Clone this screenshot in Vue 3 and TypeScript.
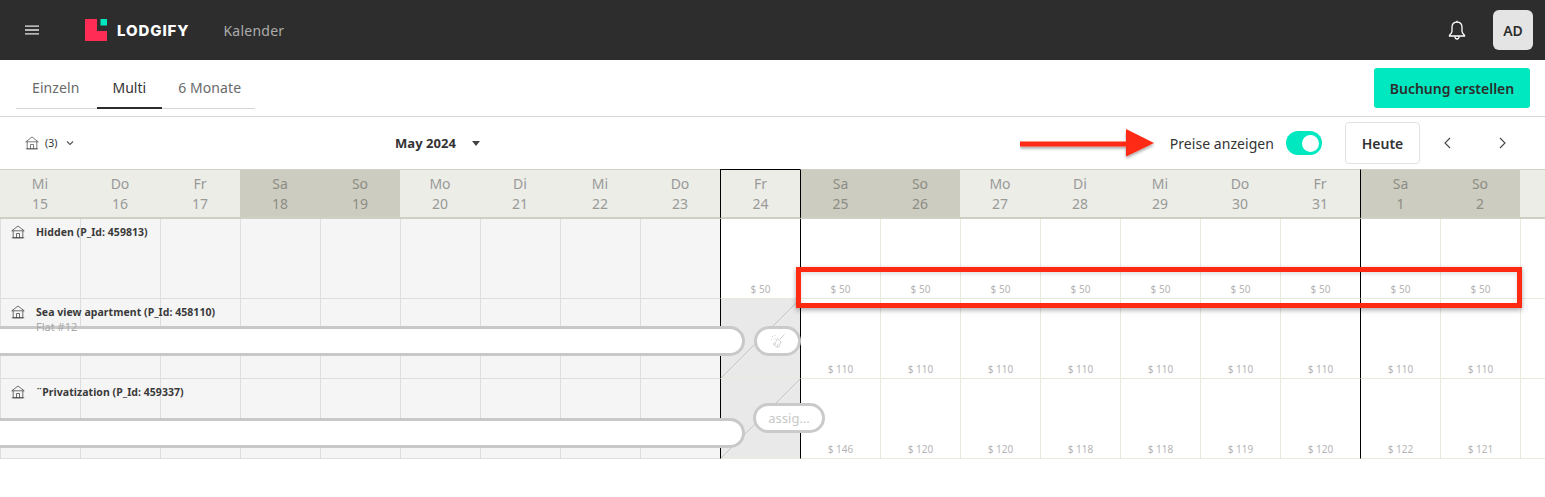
<script setup lang="ts">
interface Day { name: string; num: number; weekend: boolean; edge: boolean; today: boolean; past: boolean }
interface Row { title: string; sub?: string; prices: (number | null)[]; blocked: boolean; bar: string; pill: string }

const names = ['Mi','Do','Fr','Sa','So','Mo','Di']
const days: Day[] = Array.from({ length: 20 }, (_, i) => {
  const n = names[i % 7]
  const num = i < 17 ? 15 + i : i - 16
  return {
    name: i === 19 ? '' : n,
    num,
    weekend: n === 'Sa' || n === 'So',
    edge: i === 9 || i === 10 || i === 17,
    today: i === 9,
    past: i < 9
  }
})
const rows: Row[] = [
  { title: 'Hidden (P_Id: 459813)', prices: [50,50,50,50,50,50,50,50,50,50], blocked: false, bar: '', pill: '' },
  { title: 'Sea view apartment (P_Id: 458110)', sub: 'Flat #12', prices: [null,110,110,110,110,110,110,110,110,110], blocked: true, bar: 'bar-a', pill: 'pill-a' },
  { title: '¨Privatization (P_Id: 459337)', prices: [null,146,120,120,118,118,119,120,122,121], blocked: true, bar: 'bar-b', pill: 'pill-b' }
]
function priceAt(r: Row, i: number): number | null {
  const k = i - 9
  return k >= 0 && k < r.prices.length ? r.prices[k] : null
}
</script>

<template>
  <div class="app">
    <header class="topbar">
      <svg class="burger" width="14" height="10" viewBox="0 0 14 10" fill="none" stroke="#e8e8e8" stroke-width="1.300">
        <path d="M0 1.200H14M0 5H14M0 8.800H14" />
      </svg>
      <svg class="logo" width="22" height="22" viewBox="0 0 22 22">
        <path d="M0 0H12V12H22V22H0Z" fill="#ff2d55" />
        <rect x="15.500" y="0" width="6.500" height="6.500" fill="#00e8c0" />
      </svg>
      <span class="brand">LODGIFY</span>
      <span class="section">Kalender</span>
      <svg class="bell" width="18" height="20" viewBox="0 0 18 20" fill="none" stroke="#fff" stroke-width="1.300">
        <path d="M9 2.200C5.800 2.200 4 4.600 4 7.500V11.500C4 13 2.800 14 1.500 15.200V16H16.500V15.200C15.200 14 14 13 14 11.500V7.500C14 4.600 12.200 2.200 9 2.200Z" />
        <path d="M9 2.200V.8M6.800 16.200C7 18 8 19 9 19S11 18 11.200 16.200" />
      </svg>
      <div class="avatar">AD</div>
    </header>

    <div class="tabs-row">
      <nav class="tabs">
        <span class="tab">Einzeln</span>
        <span class="tab active">Multi</span>
        <span class="tab">6 Monate</span>
      </nav>
      <button class="create">Buchung erstellen</button>
    </div>

    <div class="toolbar">
      <div class="prop-filter">
        <svg width="14" height="14" viewBox="0 0 14 14" fill="none" stroke="#444" stroke-width=".7">
          <path d="M.8 5.800L7 1L13.200 5.800H.8ZM2.200 5.800V12.800H11.800V5.800M.8 12.800H13.200M5.500 12.800V8.500H8.500V12.800" />
        </svg>
        <span>(3)</span>
        <svg class="filter-chevron" width="8" height="6" viewBox="0 0 8 6" fill="none" stroke="#555" stroke-width="1.100"><path d="M1 1.500L4 4.500L7 1.500" /></svg>
      </div>
      <div class="month">
        <strong>May 2024</strong>
        <span class="caret"></span>
      </div>
      <div class="controls">
        <span class="label">Preise anzeigen</span>
        <span class="toggle"><i></i></span>
        <button class="today-btn">Heute</button>
        <div class="nav-arrows">
          <svg width="9" height="12" viewBox="0 0 9 12" fill="none" stroke="#444" stroke-width="1.100"><path d="M7 1L2 6L7 11" /></svg>
          <svg width="9" height="12" viewBox="0 0 9 12" fill="none" stroke="#444" stroke-width="1.100"><path d="M2 1L7 6L2 11" /></svg>
        </div>
      </div>
    </div>

    <section class="calendar">
      <div class="grid head">
        <div v-for="d in days" :key="d.num + d.name" class="hcell" :class="{ weekend: d.weekend, edge: d.edge, current: d.today }">
          <span>{{ d.name }}</span>
          <span>{{ d.name ? d.num : '' }}</span>
        </div>
      </div>
      <div v-for="r in rows" :key="r.title" class="grid row">
        <div
          v-for="(d, i) in days"
          :key="i"
          class="cell"
          :class="{ past: d.past, edge: d.edge, blocked: r.blocked && d.today }"
        >
          <span v-if="priceAt(r, i) !== null" class="price">$ {{ priceAt(r, i) }}</span>
        </div>
        <div v-if="r.bar" class="bar" :class="r.bar"></div>
        <div v-if="r.pill" class="pill" :class="r.pill">
          <svg v-if="r.pill === 'pill-a'" width="16" height="16" viewBox="0 0 16 16" fill="none" stroke="#c8c8c8" stroke-width=".8">
            <path d="M14.500 1.500L10 6M7.500 5.500L11 9L8.500 14.500C6.500 14 4.500 12.800 3.200 10.800C5 10.500 6.500 8 7.500 5.500ZM9 7.500L8.500 7M5.500 10L4.800 12.300M8 10.800L7 13.800" />
            <path d="M2 3.500H3M4.500 6H5.500M1 6.500H2M4.500 2.500H5.500" />
          </svg>
          <span v-else>assig…</span>
        </div>
        <div class="prop">
          <svg width="14" height="14" viewBox="0 0 14 14" fill="none" stroke="#333" stroke-width=".7">
            <path d="M.8 5.800L7 1L13.200 5.800H.8ZM2.200 5.800V12.800H11.800V5.800M.8 12.800H13.200M5.500 12.800V8.500H8.500V12.800" />
          </svg>
          <div class="prop-text">
            <b>{{ r.title }}</b>
            <small v-if="r.sub">{{ r.sub }}</small>
          </div>
        </div>
      </div>
    </section>

    <svg class="arrow" width="145" height="38" viewBox="0 0 145 38">
      <defs>
        <filter id="sh" x="-10%" y="-30%" width="120%" height="170%">
          <feDropShadow dx="0" dy="2" stdDeviation="1.500" flood-color="#000" flood-opacity=".35" />
        </filter>
      </defs>
      <path d="M0 13.500H106V1L134 15L106 28.500V18.500H0Z" fill="#ff2a12" filter="url(#sh)" />
    </svg>
    <div class="redbox"></div>
  </div>
</template>

<style>
html, body { margin: 0; background: #fff; }
</style>

<style scoped>
.app {
  position: relative;
  width: 1545px;
  height: 497px;
  overflow: hidden;
  font-family: "Noto Sans", "Open Sans", sans-serif;
  color: #333;
}
.topbar {
  height: 60px;
  background: #2d2d2d;
  display: flex;
  align-items: center;
  padding-left: 25px;
  padding-right: 12px;
  box-sizing: border-box;
}
.logo { margin-left: 46px; }
.brand {
  margin-left: 10px;
  font-family: Inter, sans-serif;
  font-weight: 800;
  font-size: 15px;
  letter-spacing: .9px;
  color: #fff;
}
.section { margin-left: 34px; font-size: 14px; letter-spacing: .25px; color: #acacac; }
.bell { margin-left: auto; margin-right: 27px; }
.avatar {
  width: 40px;
  height: 40px;
  border-radius: 6px;
  background: #e4e4e4;
  color: #2d2d2d;
  font-size: 14px;
  font-weight: 600;
  display: flex;
  align-items: center;
  justify-content: center;
}
.tabs-row {
  height: 57px;
  box-sizing: border-box;
  border-bottom: 1px solid #d6d6d6;
  display: flex;
  justify-content: space-between;
  padding: 8px 15px 0 16px;
}
.tabs { display: flex; height: 40px; border-bottom: 1px solid #d6d6d6; }
.tab { padding: 0 16px; font-size: 14px; line-height: 40px; letter-spacing: .1px; color: #6a6a6a; }
.tab:first-child { padding-right: 17px; }
.tab:last-child { padding-right: 14px; }
.tab.active { color: #333; letter-spacing: 0; border-bottom: 2px solid #2d2d2d; height: 39px; }
.create {
  width: 156px;
  height: 40px;
  border: 0;
  border-radius: 3px;
  background: #00e8c0;
  color: #2d2d2d;
  font: 600 14px "Noto Sans", sans-serif;
  padding: 0;
}
.toolbar {
  height: 52px;
  box-sizing: border-box;
  display: flex;
  align-items: center;
  padding-left: 25px;
  padding-right: 38px;
}
.prop-filter { display: flex; align-items: center; gap: 6px; font-size: 10.500px; width: 370px; }
.filter-chevron { margin-left: 3px; }
.month { display: flex; align-items: center; gap: 16px; font-size: 13px; letter-spacing: .05px; }
.month strong { font-weight: 700; }
.caret { width: 0; height: 0; border-left: 4.500px solid transparent; border-right: 4.500px solid transparent; border-top: 5px solid #444; }
.controls { margin-left: auto; display: flex; align-items: center; }
.label { font-size: 14px; letter-spacing: .05px; color: #333; }
.toggle {
  width: 36px;
  height: 24px;
  margin-left: 12px;
  border-radius: 12px;
  background: #00e8c0;
  position: relative;
}
.toggle i { position: absolute; right: 3px; top: 3.500px; width: 17px; height: 17px; border-radius: 50%; background: #fff; }
.today-btn {
  width: 75px;
  height: 42px;
  margin-left: 23px;
  box-sizing: border-box;
  border: 1px solid #e2e2e2;
  border-radius: 4px;
  background: #fff;
  color: #333;
  font: 600 14px "Noto Sans", sans-serif;
  padding: 0;
}
.nav-arrows { width: 64px; margin-left: 23px; display: flex; justify-content: space-between; }
.calendar { width: 1545px; overflow: hidden; }
.grid { display: grid; grid-template-columns: repeat(20, 80px); width: 1600px; }
.head { height: 50px; }
.hcell {
  box-sizing: border-box;
  background: #edede8;
  border-top: 1px solid #cfcfc4;
  border-bottom: 2px solid #cfcfc4;
  display: flex;
  flex-direction: column;
  align-items: center;
  padding-top: 4px;
  font-size: 14px;
  line-height: 20px;
  color: #999;
}
.hcell.weekend { background: #ccccc0; color: #8d8d86; }
.hcell.edge { border-left: 1px solid #000; }
.hcell.current { border-top-color: #000; }
.row { height: 80px; position: relative; }
.cell {
  box-sizing: border-box;
  border-left: 1px solid #e9e9dc;
  border-bottom: 1px solid #e9e9dc;
  background: #fff;
  position: relative;
  display: flex;
  justify-content: center;
  align-items: flex-end;
}
.cell.past { background: #f5f5f5; border-color: #dedede; }
.cell.blocked {
  background: linear-gradient(to top left, transparent calc(50% - .6px), #c6c6c6 50%, transparent calc(50% + .6px)) , #e9e9e9;
}
.cell.edge { border-left-color: #000; }
.price { font-size: 10px; line-height: 14px; padding-bottom: 2px; color: #b4b4b4; }
.prop { position: absolute; left: 11px; top: 6px; display: flex; gap: 11px; z-index: 3; }
.prop-text { display: flex; flex-direction: column; }
.prop-text b { font-size: 10.500px; line-height: 14px; font-weight: 700; letter-spacing: .05px; color: #3a3a3a; white-space: nowrap; }
.prop-text small { font-size: 11px; line-height: 14px; margin-top: 1px; color: #a8a8a8; }
.bar {
  position: absolute;
  left: -30px;
  width: 775px;
  height: 30px;
  box-sizing: border-box;
  border: 3px solid #c8c8c8;
  border-radius: 15px;
  background: #fff;
  z-index: 2;
}
.bar-a { top: 27px; }
.bar-b { top: 39px; }
.pill {
  position: absolute;
  height: 30px;
  box-sizing: border-box;
  border: 3px solid #cacaca;
  border-radius: 15px;
  background: #fff;
  z-index: 2;
  display: flex;
  align-items: center;
  justify-content: center;
  color: #c8c8c8;
  font-size: 13px;
}
.pill-a { left: 754px; width: 47px; top: 27px; }
.pill-b { left: 753px; width: 72px; top: 24px; }
.arrow { position: absolute; left: 1020px; top: 128px; z-index: 5; }
.redbox {
  position: absolute;
  left: 796px;
  top: 267px;
  width: 726px;
  height: 41px;
  box-sizing: border-box;
  border: 5px solid #ff2a12;
  box-shadow: 0 2px 5px rgba(0,0,0,.35), inset 0 2px 4px rgba(0,0,0,.12);
  z-index: 5;
}
</style>
